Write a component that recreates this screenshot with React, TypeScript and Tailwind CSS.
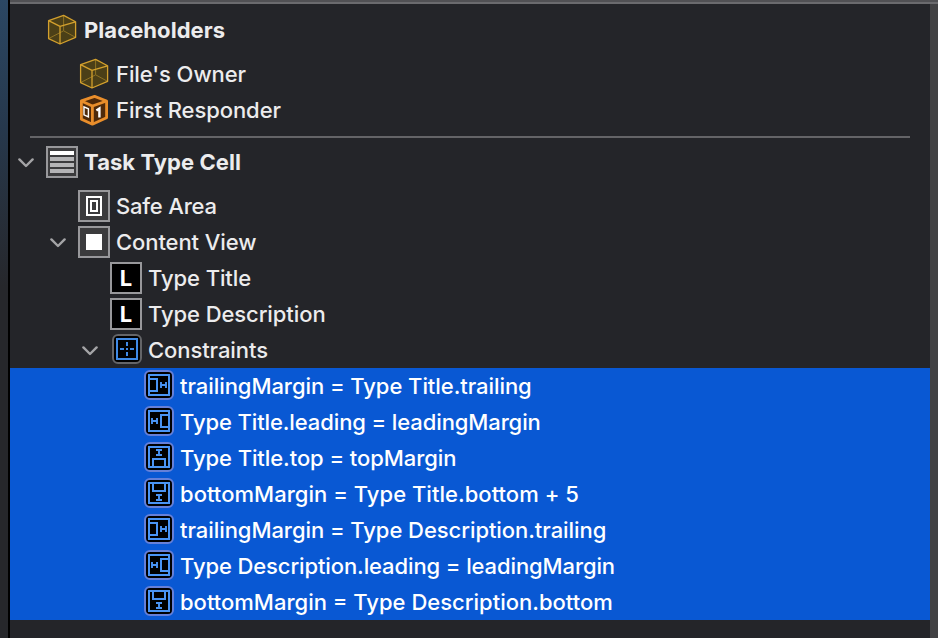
import type { ReactNode } from "react";
import { clsx } from "clsx";

type Edge = "leading" | "trailing" | "top" | "bottom";

function CubeIcon() {
  return (
    <svg viewBox="0 0 32 32" className="h-8 w-8" fill="none">
      <path d="M2.6 6.6 17.6 1.4 29.6 7.8V23.4L14 30 2.6 24.6Z" fill="#4b3f17" />
      <path d="M17.6 1.4V16.8L2.6 24.6M17.6 16.8 29.6 23.4" stroke="#8f7223" strokeWidth="1" />
      <path
        d="M2.6 6.6 17.6 1.4 29.6 7.8V23.4L14 30 2.6 24.6ZM2.6 6.6 14 12.4 29.6 7.8M14 12.4V30"
        stroke="#d3a02d"
        strokeWidth="1.3"
        strokeLinejoin="round"
      />
    </svg>
  );
}

function ResponderIcon() {
  return (
    <svg viewBox="0 0 32 32" className="h-8 w-8" fill="none">
      <path d="M3.4 6.8 16.6 2.4 28.6 7V23.8L14.4 30.2 3.4 25.2Z" fill="#4f2a0a" stroke="#e98e2b" strokeWidth="2.8" strokeLinejoin="round" />
      <path d="M3.4 7 14.4 12 28.6 7M14.4 12V30" stroke="#e98e2b" strokeWidth="2.8" />
      <path d="M6 12.8 10.4 14.8V22.8L6 20.8Z" stroke="#fff" strokeWidth="1.4" />
      <path d="M18.4 16.6 21.4 14.6V23.4" stroke="#fff" strokeWidth="2.4" />
    </svg>
  );
}

function ViewBox({ black, children }: { black?: boolean; children: ReactNode }) {
  return (
    <div
      className={clsx(
        "flex h-8 w-8 items-center justify-center border-2 border-[#98989b]",
        black ? "bg-black" : "bg-[#3b3b3d]"
      )}
    >
      {children}
    </div>
  );
}

function CellIcon() {
  return (
    <ViewBox>
      <div className="flex w-6 flex-col gap-0.5">
        <div className="h-1 bg-white" />
        <div className="h-1 bg-[#b4b4b6]" />
        <div className="h-1 bg-[#b4b4b6]" />
        <div className="h-1 bg-[#b4b4b6]" />
      </div>
    </ViewBox>
  );
}

function SafeAreaIcon() {
  return (
    <ViewBox>
      <div className="flex h-5 w-4 items-center justify-center border-2 border-white">
        <div className="h-3 w-2 border-2 border-white" />
      </div>
    </ViewBox>
  );
}

function LabelIcon() {
  return (
    <ViewBox black>
      <span className="text-[22px] leading-none font-bold text-white">L</span>
    </ViewBox>
  );
}

function ConstraintsIcon() {
  return (
    <svg viewBox="0 0 30 30" className="mb-0.5 ml-0.5 h-[30px] w-[30px]" fill="none">
      <rect x="1" y="1" width="28" height="28" rx="5" fill="#000" stroke="#646568" strokeWidth="2" />
      <rect x="5" y="5" width="20" height="20" stroke="#3f8ae6" strokeWidth="2" />
      <path d="M15 8V12M15 18V22M8 15H12M18 15H22M14 15H16" stroke="#3f8ae6" strokeWidth="2" />
    </svg>
  );
}

// The horizontal glyph is drawn once and mirrored or turned for the other edges
function ConstraintIcon({ edge }: { edge: Edge }) {
  const transforms = {
    trailing: undefined,
    leading: "matrix(-1 0 0 1 30 0)",
    bottom: "matrix(0 1 1 0 0 0)",
    top: "matrix(0 -1 1 0 0 30)",
  };

  return (
    <svg viewBox="0 0 30 30" className="mb-0.5 ml-0.5 h-[30px] w-[30px]" fill="none">
      <rect x="1" y="1" width="28" height="28" rx="5" fill="#000" stroke="#6680d8" strokeWidth="2" />
      <g transform={transforms[edge]} stroke="#4a94f4" strokeWidth="2">
        <rect x="5" y="5" width="20" height="20" />
        <path d="M5 9H13V21H5" />
        <path d="M17 12V18M22 12V18M17 15H22" strokeWidth="1.9" />
      </g>
    </svg>
  );
}

function Chevron() {
  return (
    <svg viewBox="0 0 16 10" className="mt-0.5 h-2.5 w-4" fill="none">
      <path d="M1.4 1.4 8 8 14.6 1.4" stroke="#a4a4a6" strokeWidth="2.4" strokeLinecap="round" strokeLinejoin="round" />
    </svg>
  );
}

interface RowProps {
  icon: ReactNode;
  label: string;
  className?: string;
  labelClass?: string;
  open?: boolean;
}

function Row({ icon, label, className, labelClass = "tracking-[-0.08px]", open }: RowProps) {
  return (
    <div className={clsx("flex h-9 items-center", className)}>
      <div className="w-7 shrink-0">{open && <Chevron />}</div>
      <div className="w-8 shrink-0">{icon}</div>
      <span className={clsx("pl-1.5 whitespace-pre", labelClass)}>{label}</span>
    </div>
  );
}

const constraints: { edge: Edge; label: string; labelClass: string }[] = [
  { edge: "trailing", label: "trailingMargin = Type Title.trailing", labelClass: "tracking-[-0.06px]" },
  { edge: "leading", label: "Type Title.leading = leadingMargin", labelClass: "tracking-[-0.11px]" },
  { edge: "top", label: "Type Title.top = topMargin", labelClass: "tracking-[-0.08px]" },
  { edge: "bottom", label: "bottomMargin = Type Title.bottom + 5", labelClass: "tracking-[0.03px]" },
  { edge: "trailing", label: "trailingMargin = Type Description.trailing", labelClass: "tracking-[-0.06px]" },
  { edge: "leading", label: "Type Description.leading = leadingMargin", labelClass: "tracking-[-0.11px]" },
  { edge: "bottom", label: "bottomMargin = Type Description.bottom", labelClass: "tracking-[0px]" },
];

export default function App() {
  return (
    <div className="flex h-[638px] w-[938px] overflow-hidden bg-[#242529] font-['Inter',sans-serif] text-[22px] leading-9 font-[450] text-[#ececed]">
      <div className="w-2 shrink-0 bg-linear-to-b from-[#2b4763] via-[#26384c] via-20% to-[#26272b] to-45%" />
      <div className="w-0.5 shrink-0 bg-black" />
      <div className="flex flex-1 flex-col">
        <div className="h-1 shrink-0 border-b-2 border-[#6b6b6e] bg-[#515154]" />
        <div className="flex flex-1">
          <div className="w-[920px]">
            <Row className="mb-2 h-11 pt-2 pl-2" icon={<CubeIcon />} label="Placeholders" labelClass="font-bold tracking-[0.06px]" />
            <Row className="pl-10" icon={<CubeIcon />} label="File's Owner" />
            <Row className="pl-10" icon={<ResponderIcon />} label="First Responder" />
            <div className="mx-5 mt-2 h-0.5 bg-[#646467]" />
            <Row className="mb-0.5 h-12 pl-2" open icon={<CellIcon />} label="Task Type Cell" labelClass="font-bold tracking-[0.06px]" />
            <Row className="pl-10" icon={<SafeAreaIcon />} label="Safe Area" labelClass="tracking-[-0.2px]" />
            <Row className="pl-10" open icon={<ViewBox><div className="h-4 w-4 bg-white" /></ViewBox>} label="Content View" />
            <Row className="pl-[72px]" icon={<LabelIcon />} label="Type Title" />
            <Row className="pl-[72px]" icon={<LabelIcon />} label="Type Description" />
            <Row className="pl-[72px]" open icon={<ConstraintsIcon />} label="Constraints" />
            <div className="bg-[#0958d3] text-white">
              {constraints.map((c) => (
                <Row
                  key={c.label}
                  className="pl-[104px]"
                  icon={<ConstraintIcon edge={c.edge} />}
                  label={c.label}
                  labelClass={c.labelClass}
                />
              ))}
            </div>
          </div>
          <div className="flex-1 bg-[#424244]" />
        </div>
      </div>
    </div>
  );
}
